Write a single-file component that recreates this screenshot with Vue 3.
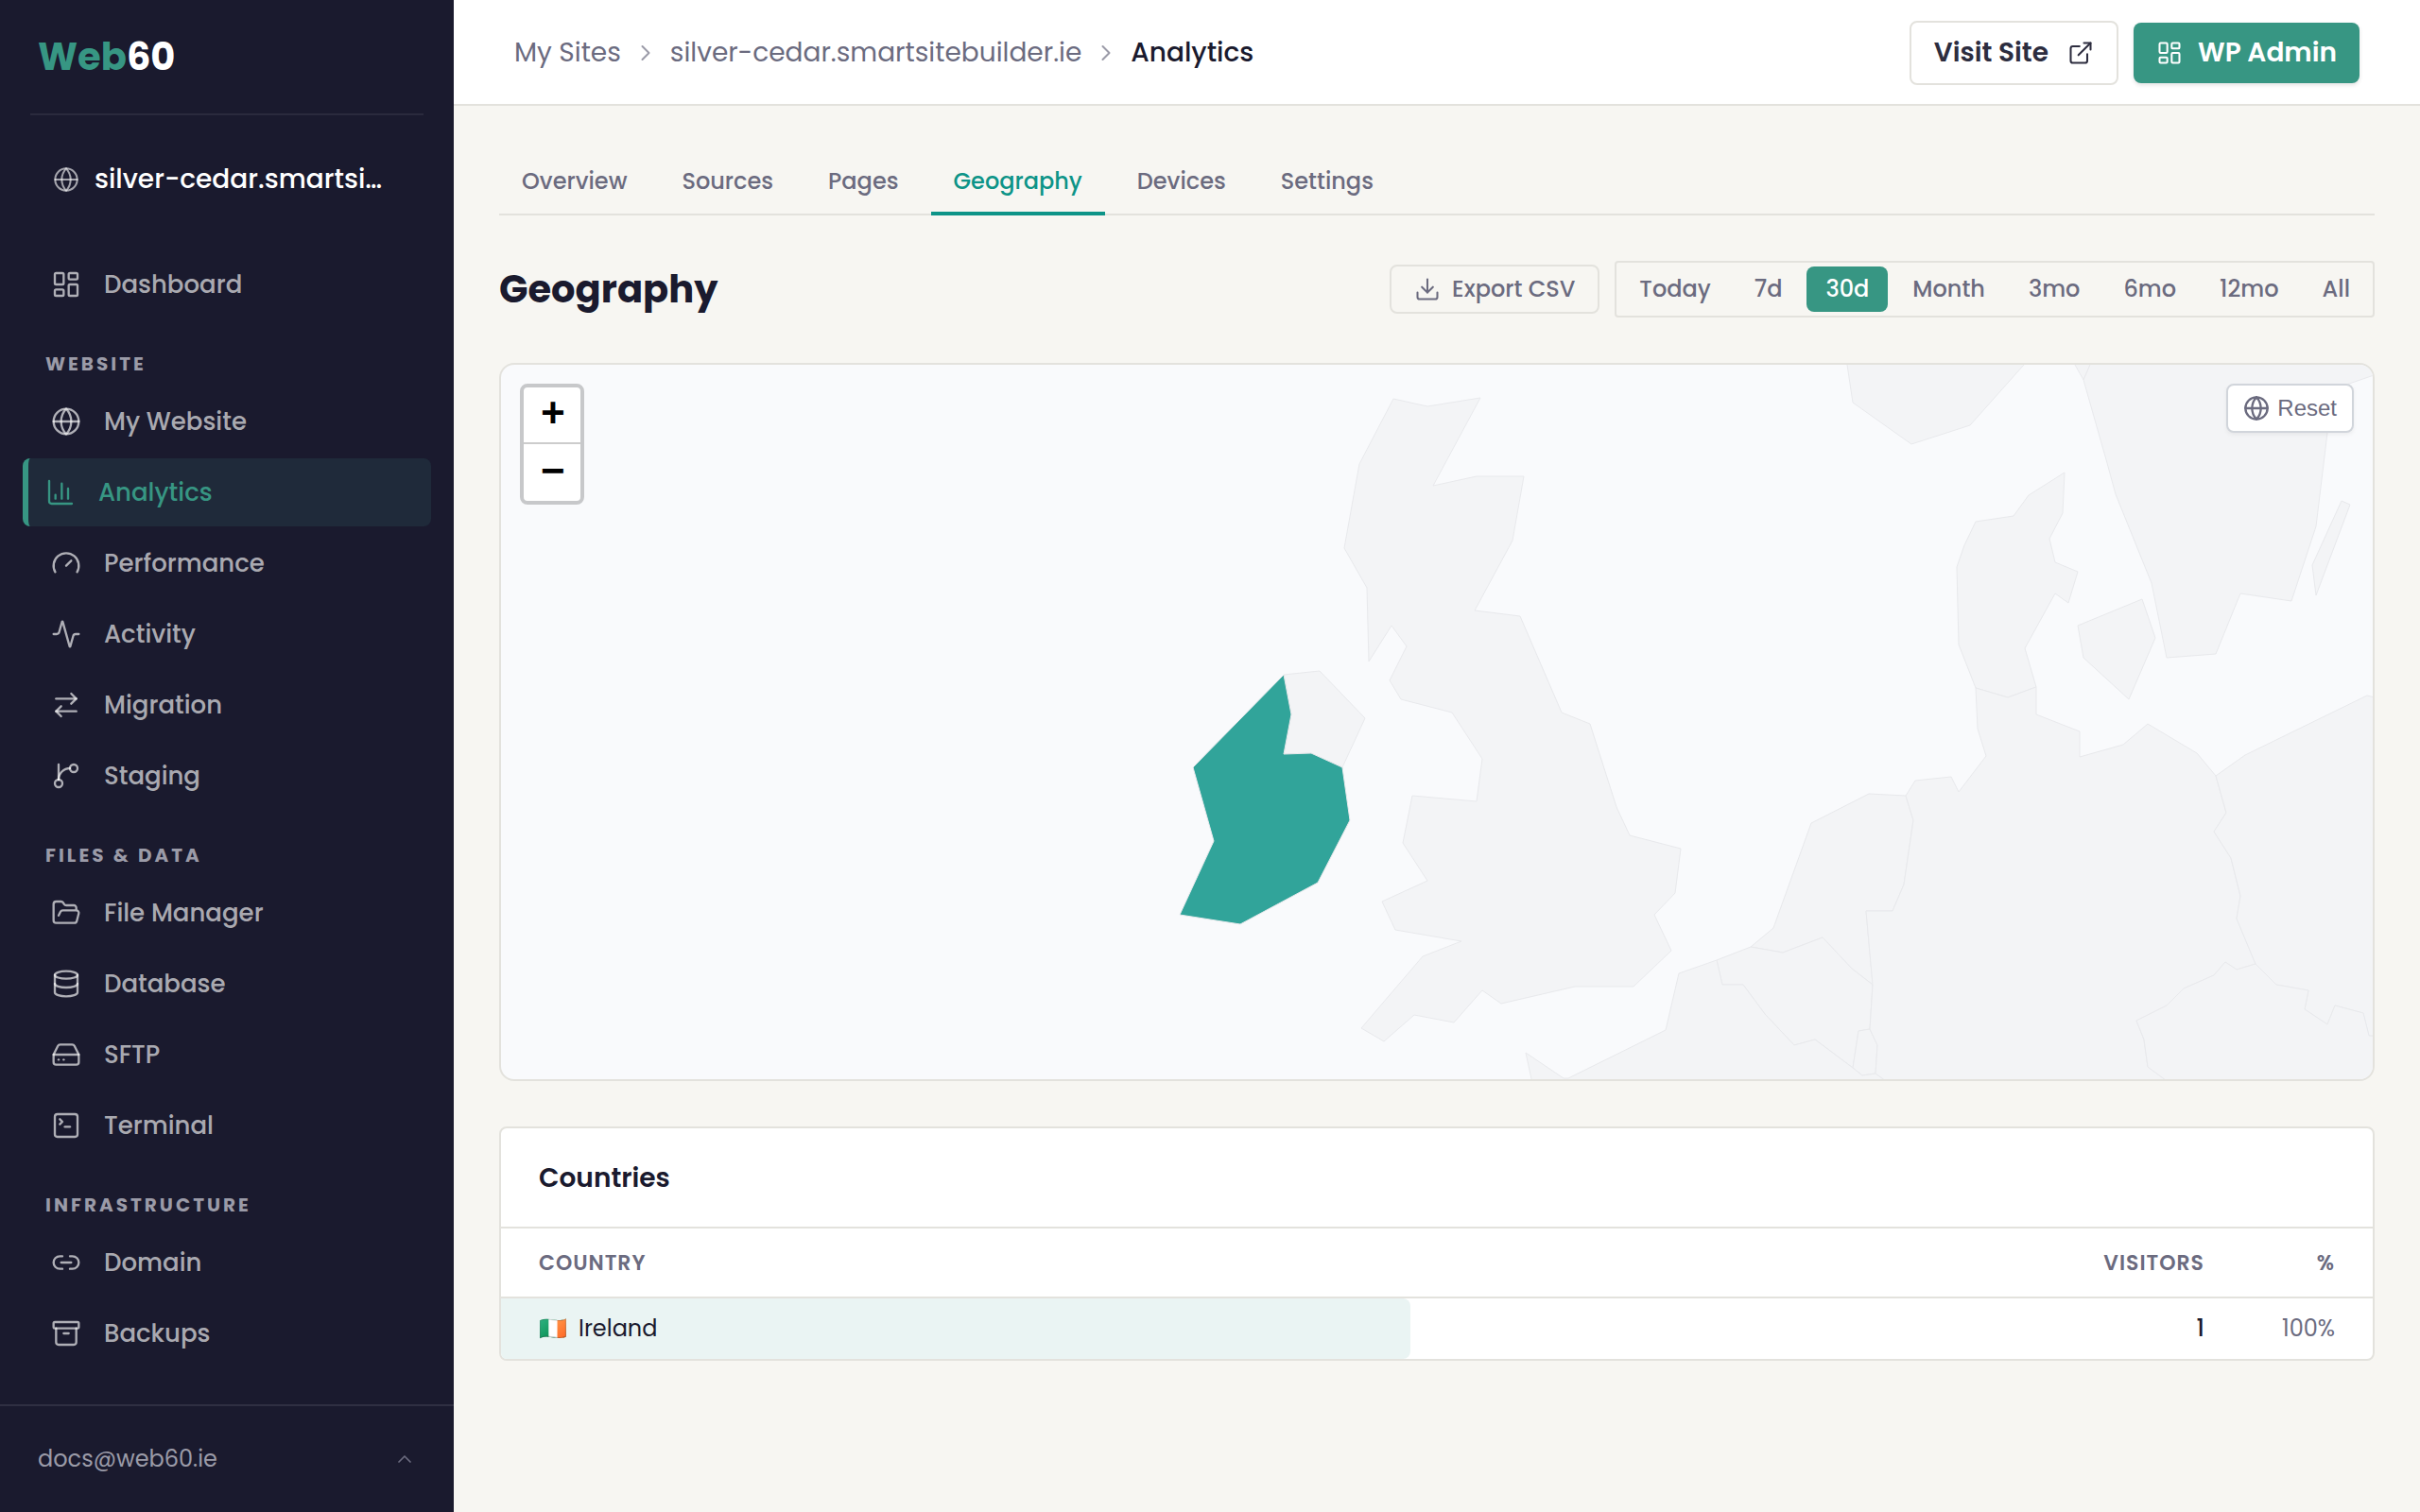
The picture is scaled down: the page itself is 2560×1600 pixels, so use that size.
<script setup>
import { h, ref } from 'vue'

const ICONS = {
  dashboard: [
    ['rect', { x: 3, y: 3, width: 7, height: 9, rx: 1 }],
    ['rect', { x: 14, y: 3, width: 7, height: 5, rx: 1 }],
    ['rect', { x: 14, y: 12, width: 7, height: 9, rx: 1 }],
    ['rect', { x: 3, y: 16, width: 7, height: 5, rx: 1 }],
  ],
  globe: [
    ['circle', { cx: 12, cy: 12, r: 10 }],
    ['path', { d: 'M12 2a14.5 14.5 0 0 0 0 20 14.5 14.5 0 0 0 0-20' }],
    ['path', { d: 'M2 12h20' }],
  ],
  chart: [
    ['path', { d: 'M3 3v16a2 2 0 0 0 2 2h16' }],
    ['path', { d: 'M18 17V9' }],
    ['path', { d: 'M13 17V5' }],
    ['path', { d: 'M8 17v-3' }],
  ],
  gauge: [
    ['path', { d: 'm12 14 4-4' }],
    ['path', { d: 'M3.34 19a10 10 0 1 1 17.32 0' }],
  ],
  activity: [
    ['path', { d: 'M22 12h-2.48a2 2 0 0 0-1.93 1.46l-2.35 8.36a.25.25 0 0 1-.48 0L9.24 2.18a.25.25 0 0 0-.48 0l-2.35 8.36A2 2 0 0 1 4.49 12H2' }],
  ],
  arrows: [
    ['path', { d: 'm16 3 4 4-4 4' }],
    ['path', { d: 'M20 7H4' }],
    ['path', { d: 'm8 21-4-4 4-4' }],
    ['path', { d: 'M4 17h16' }],
  ],
  branch: [
    ['path', { d: 'M6 3v12' }],
    ['circle', { cx: 18, cy: 6, r: 3 }],
    ['circle', { cx: 6, cy: 18, r: 3 }],
    ['path', { d: 'M15 6a9 9 0 0 0-9 9' }],
  ],
  folder: [
    ['path', { d: 'm6 14 1.5-2.9A2 2 0 0 1 9.24 10H20a2 2 0 0 1 1.94 2.5l-1.54 6a2 2 0 0 1-1.95 1.5H4a2 2 0 0 1-2-2V5a2 2 0 0 1 2-2h3.9a2 2 0 0 1 1.69.9l.81 1.2a2 2 0 0 0 1.67.9H18a2 2 0 0 1 2 2v2' }],
  ],
  database: [
    ['ellipse', { cx: 12, cy: 5, rx: 9, ry: 3 }],
    ['path', { d: 'M3 5v14a9 3 0 0 0 18 0V5' }],
    ['path', { d: 'M3 12a9 3 0 0 0 18 0' }],
  ],
  drive: [
    ['path', { d: 'M22 12H2' }],
    ['path', { d: 'M5.45 5.11 2 12v6a2 2 0 0 0 2 2h16a2 2 0 0 0 2-2v-6l-3.45-6.89A2 2 0 0 0 16.76 4H7.24a2 2 0 0 0-1.79 1.11z' }],
    ['path', { d: 'M6 16h.01' }],
    ['path', { d: 'M10 16h.01' }],
  ],
  terminal: [
    ['path', { d: 'm7 11 2-2-2-2' }],
    ['path', { d: 'M11 13h4' }],
    ['rect', { x: 3, y: 3, width: 18, height: 18, rx: 2 }],
  ],
  link: [
    ['path', { d: 'M9 17H7A5 5 0 0 1 7 7h2' }],
    ['path', { d: 'M15 7h2a5 5 0 1 1 0 10h-2' }],
    ['path', { d: 'M8 12h8' }],
  ],
  archive: [
    ['rect', { x: 2, y: 3, width: 20, height: 5, rx: 1 }],
    ['path', { d: 'M4 8v11a2 2 0 0 0 2 2h12a2 2 0 0 0 2-2V8' }],
    ['path', { d: 'M10 12h4' }],
  ],
  external: [
    ['path', { d: 'M15 3h6v6' }],
    ['path', { d: 'M10 14 21 3' }],
    ['path', { d: 'M18 13v6a2 2 0 0 1-2 2H5a2 2 0 0 1-2-2V8a2 2 0 0 1 2-2h6' }],
  ],
  download: [
    ['path', { d: 'M12 15V3' }],
    ['path', { d: 'M21 15v4a2 2 0 0 1-2 2H5a2 2 0 0 1-2-2v-4' }],
    ['path', { d: 'm7 10 5 5 5-5' }],
  ],
  right: [['path', { d: 'm9 18 6-6-6-6' }]],
  up: [['path', { d: 'm18 15-6-6-6 6' }]],
}

const Icon = ({ name, size = 32, weight = 1.75 }) =>
  h(
    'svg',
    {
      width: size,
      height: size,
      viewBox: '0 0 24 24',
      fill: 'none',
      stroke: 'currentColor',
      'stroke-width': weight,
      'stroke-linecap': 'round',
      'stroke-linejoin': 'round',
      'aria-hidden': 'true',
      style: { flex: 'none' },
    },
    ICONS[name].map(([tag, attrs]) => h(tag, attrs)),
  )
Icon.props = ['name', 'size', 'weight']

const domain = 'silver-cedar.smartsitebuilder.ie'
const truncate = (text, length) => (text.length > length ? text.slice(0, length) + '…' : text)

const sections = [
  { items: [{ label: 'Dashboard', icon: 'dashboard' }] },
  {
    title: 'Website',
    items: [
      { label: 'My Website', icon: 'globe' },
      { label: 'Analytics', icon: 'chart', active: true },
      { label: 'Performance', icon: 'gauge' },
      { label: 'Activity', icon: 'activity' },
      { label: 'Migration', icon: 'arrows' },
      { label: 'Staging', icon: 'branch' },
    ],
  },
  {
    title: 'Files & Data',
    items: [
      { label: 'File Manager', icon: 'folder' },
      { label: 'Database', icon: 'database' },
      { label: 'SFTP', icon: 'drive' },
      { label: 'Terminal', icon: 'terminal' },
    ],
  },
  {
    title: 'Infrastructure',
    items: [
      { label: 'Domain', icon: 'link' },
      { label: 'Backups', icon: 'archive' },
    ],
  },
]

const tabs = ['Overview', 'Sources', 'Pages', 'Geography', 'Devices', 'Settings']
const activeTab = 'Geography'

const ranges = ['Today', '7d', '30d', 'Month', '3mo', '6mo', '12mo', 'All']
const range = ref('30d')

const countries = [{ flag: '🇮🇪', name: 'Ireland', visitors: 1, percent: '100%', bar: 48.6 }]

const land = [
  // Great Britain
  '1474,422 1510,430 1566,421 1516,514 1562,504 1612,504 1600,572 1560,646 1608,652 1652,754 1682,766 1710,854 1724,884 1778,898 1772,945 1750,968 1768,1006 1728,1044 1666,1044 1588,1062 1568,1048 1538,1082 1496,1074 1464,1102 1440,1088 1505,1012 1546,996 1476,984 1462,954 1510,932 1484,892 1494,842 1562,848 1568,803 1536,754 1482,740 1470,720 1488,684 1472,662 1448,700 1446,622 1422,580 1438,491',
  // Northern Ireland
  '1358,714 1396,710 1444,760 1420,812 1387,797 1358,798 1366,756',
  // Norway
  '1954,376 1954,386 1960,426 2022,470 2084,450 2141,386 2150,376',
  '2190,376 2195,386 2204,402 2211,386 2214,376',
  // Sweden
  '2204,402 2229,490 2238,523 2276,617 2292,696 2344,692 2370,628 2424,636 2450,557 2462,458 2467,414 2485,406 2520,394 2520,376 2214,376 2211,386',
  '2477,530 2486,534 2450,630 2446,598',
  // Denmark
  '2090,728 2072,682 2070,600 2078,577 2090,552 2130,546 2146,524 2184,500 2182,543 2168,570 2174,595 2198,605 2188,638 2174,628 2142,686 2154,727 2124,738',
  '2198,662 2266,634 2280,675 2252,740 2204,696',
  // Netherlands
  '1852,1002 1876,982 1916,871 1977,840 2016,842 2024,868 2014,936 2002,964 1974,964 1981,1042 1959,1025 1928,992 1886,1008',
  // Belgium
  '1816,1016 1852,1002 1886,1008 1928,992 1959,1025 1981,1042 1978,1089 1966,1091 1960,1130 1920,1100 1898,1106 1867,1073 1844,1042 1822,1042',
  // Luxembourg
  '1966,1091 1978,1089 1986,1106 1984,1136 1970,1138 1960,1130',
  // France
  '1614,1114 1654,1141 1659,1141 1762,1090 1776,1030 1816,1016 1822,1042 1844,1042 1867,1073 1898,1106 1920,1100 1960,1130 1970,1138 1984,1136 1998,1146 1998,1160 1624,1160',
  // Germany
  '2016,842 2026,826 2064,822 2072,838 2101,800 2092,771 2090,728 2124,738 2154,727 2154,756 2200,774 2200,801 2246,788 2272,766 2324,797 2344,821 2355,860 2342,880 2360,908 2370,948 2366,972 2386,1020 2366,1026 2354,1018 2342,1032 2310,1046 2292,1064 2260,1080 2268,1100 2272,1129 2295,1146 2295,1160 1998,1160 1998,1146 1984,1136 1986,1106 1978,1089 1981,1042 1974,964 2002,964 2014,936 2024,868',
  // Poland
  '2344,821 2375,799 2504,736 2520,740 2520,1097 2506,1096 2500,1072 2470,1064 2462,1084 2438,1068 2442,1048 2408,1042 2386,1020 2366,972 2370,948 2360,908 2342,880 2355,860',
  // Czechia
  '2386,1020 2408,1042 2442,1048 2438,1068 2462,1084 2470,1064 2500,1072 2506,1096 2520,1097 2520,1160 2295,1160 2295,1146 2272,1129 2268,1100 2260,1080 2292,1064 2310,1046 2342,1032 2354,1018 2366,1026',
]
const ireland =
  '1358,714 1366,756 1358,798 1387,797 1420,812 1428,868 1394,934 1312,978 1248,968 1284,890 1262,812'
</script>

<template>
  <div class="app">
    <aside class="sidebar">
      <div class="brand"><span class="brand-accent">Web</span>60</div>
      <a class="site" href="#" :title="domain">
        <Icon name="globe" :size="28" />
        <span class="site-name">{{ truncate(domain, 20) }}</span>
      </a>
      <nav class="nav">
        <div v-for="(section, i) in sections" :key="i" class="nav-section">
          <h2 v-if="section.title" class="nav-title">{{ section.title }}</h2>
          <a
            v-for="item in section.items"
            :key="item.label"
            href="#"
            class="nav-item"
            :class="{ active: item.active }"
          >
            <Icon :name="item.icon" :size="32" />
            <span>{{ item.label }}</span>
          </a>
        </div>
      </nav>
      <button type="button" class="account">
        <span>docs@web60.ie</span>
        <Icon class="account-caret" name="up" :size="24" />
      </button>
    </aside>

    <div class="page">
      <header class="topbar">
        <nav class="crumbs">
          <a href="#">My Sites</a>
          <Icon class="crumb-sep" name="right" :size="28" />
          <a href="#">{{ domain }}</a>
          <Icon class="crumb-sep" name="right" :size="28" />
          <span class="current">Analytics</span>
        </nav>
        <div class="actions">
          <a href="#" class="btn visit">Visit Site <Icon name="external" :size="28" /></a>
          <a href="#" class="btn admin"><Icon name="dashboard" :size="28" /> WP Admin</a>
        </div>
      </header>

      <main class="content">
        <nav class="tabs">
          <a v-for="tab in tabs" :key="tab" href="#" class="tab" :class="{ active: tab === activeTab }">{{ tab }}</a>
        </nav>

        <div class="heading">
          <h1>Geography</h1>
          <div class="tools">
            <button type="button" class="export"><Icon name="download" :size="28" />Export CSV</button>
            <div class="ranges">
              <button
                v-for="r in ranges"
                :key="r"
                type="button"
                class="range"
                :class="{ active: r === range }"
                @click="range = r"
              >{{ r }}</button>
            </div>
          </div>
        </div>

        <section class="map">
          <svg class="map-canvas" viewBox="530 386 1980 756" preserveAspectRatio="xMidYMid slice" role="img" aria-label="Visitors by country">
            <polygon v-for="(points, i) in land" :key="i" class="land" :points="points" />
            <polygon class="land visited" :points="ireland" />
          </svg>
          <div class="zoom">
            <button type="button" aria-label="Zoom in">+</button>
            <button type="button" aria-label="Zoom out">−</button>
          </div>
          <button type="button" class="reset"><Icon name="globe" :size="28" :weight="2" />Reset</button>
        </section>

        <section class="card">
          <h2 class="card-title">Countries</h2>
          <table>
            <thead>
              <tr>
                <th>Country</th>
                <th class="visitors">Visitors</th>
                <th class="percent">%</th>
              </tr>
            </thead>
            <tbody>
              <tr v-for="row in countries" :key="row.name">
                <td>
                  <span class="bar" :style="{ width: row.bar + '%' }"></span>
                  <span class="country"><span class="flag">{{ row.flag }}</span>{{ row.name }}</span>
                </td>
                <td class="visitors">{{ row.visitors }}</td>
                <td class="percent">{{ row.percent }}</td>
              </tr>
            </tbody>
          </table>
        </section>
      </main>
    </div>
  </div>
</template>

<style>
body {
  margin: 0;
  background: #f7f6f2;
}
</style>

<style scoped>
.app {
  display: flex;
  min-height: 100vh;
  background: #f7f6f2;
  color: #1a1a2e;
  font-family: Poppins, Inter, sans-serif;
  font-size: 24px;
  line-height: 36px;
}
.app *,
.app *::before {
  box-sizing: border-box;
}
a {
  color: inherit;
  text-decoration: none;
}
button {
  margin: 0;
  border: 0;
  background: none;
  color: inherit;
  font: inherit;
  cursor: pointer;
}
h1,
h2 {
  margin: 0;
}

/* Sidebar */
.sidebar {
  display: flex;
  flex: none;
  flex-direction: column;
  width: 480px;
  background: #1a1a2e;
}
.brand {
  margin: 0 32px;
  padding: 30px 8px;
  border-bottom: 2px solid #2a2a3d;
  color: #fff;
  font-size: 40px;
  font-weight: 700;
  line-height: 60px;
}
.brand-accent {
  color: #379683;
}
.site {
  display: flex;
  align-items: center;
  gap: 16px;
  margin: 32px 48px 0 56px;
  height: 72px;
  color: rgba(255, 255, 255, 0.6);
}
.site-name {
  color: #fff;
  font-size: 28px;
  font-weight: 500;
  white-space: nowrap;
}
.nav {
  flex: 1;
  padding: 39px 24px 24px;
}
.nav-section {
  display: flex;
  flex-direction: column;
  gap: 3px;
}
.nav-title {
  margin: 33px 24px 7px;
  color: #9b9ba8;
  font-size: 20px;
  font-weight: 700;
  letter-spacing: 3px;
  line-height: 30px;
  text-transform: uppercase;
}
.nav-item {
  display: flex;
  align-items: center;
  gap: 24px;
  height: 72px;
  padding: 0 30px;
  border-radius: 8px;
  color: rgba(255, 255, 255, 0.65);
  font-size: 26px;
  font-weight: 500;
}
.nav-item.active {
  padding-left: 18px;
  border-left: 6px solid #379683;
  background: #1f2a3a;
  color: #379683;
}
.account {
  display: flex;
  align-items: center;
  justify-content: space-between;
  height: 114px;
  padding: 0 40px;
  border-top: 2px solid #2f2f42;
  color: #9b9ba8;
}
.account-caret {
  color: #6b6b7f;
}

/* Top bar */
.page {
  flex: 1;
  min-width: 0;
}
.topbar {
  display: flex;
  align-items: center;
  justify-content: space-between;
  height: 112px;
  padding: 2px 64px 0;
  border-bottom: 2px solid #e3e2dd;
  background: #fff;
}
.crumbs {
  display: flex;
  align-items: center;
  gap: 12px;
  color: #6b6b7f;
  font-size: 28px;
}
.crumb-sep {
  color: #9b9ba8;
}
.crumbs .current {
  color: #1a1a2e;
  font-weight: 500;
}
.actions {
  display: flex;
  align-items: center;
  gap: 16px;
}
.btn {
  display: flex;
  align-items: center;
  border-radius: 8px;
  font-size: 28px;
  font-weight: 600;
}
.visit {
  gap: 20px;
  height: 68px;
  padding: 0 24px;
  border: 2px solid #e3e2dd;
  background: #fff;
  color: #2d2d3f;
}
.admin {
  gap: 16px;
  height: 64px;
  padding: 0 24px;
  background: #379683;
  box-shadow: 0 2px 4px rgba(0, 0, 0, 0.12);
  color: #fff;
}

/* Content */
.content {
  padding: 48px;
}
.tabs {
  display: flex;
  gap: 10px;
  border-bottom: 2px solid #e3e2dd;
}
.tab {
  height: 68px;
  margin-bottom: -2px;
  padding: 14px 24px;
  border-bottom: 4px solid transparent;
  color: #6b6b7f;
  font-size: 24px;
  font-weight: 500;
}
.tab.active {
  border-color: #0d9488;
  color: #0d9488;
}
.heading {
  display: flex;
  align-items: center;
  justify-content: space-between;
  margin: 48px 0;
}
h1 {
  font-size: 40px;
  font-weight: 700;
  line-height: 60px;
}
.tools {
  display: flex;
  align-items: center;
  gap: 16px;
  color: #6b6b7f;
  font-weight: 500;
}
.export {
  display: flex;
  align-items: center;
  gap: 12px;
  height: 52px;
  padding: 0 24px;
  border: 2px solid #e3e2dd;
  border-radius: 8px;
}
.ranges {
  display: flex;
  gap: 6px;
  padding: 4px;
  border: 2px solid #e3e2dd;
  border-radius: 4px;
}
.range {
  height: 48px;
  padding: 0 20px;
  border-radius: 8px;
}
.range.active {
  background: #379683;
  color: #fff;
}

/* Map */
.map {
  position: relative;
  height: 760px;
  overflow: hidden;
  border: 2px solid #e3e2dd;
  border-radius: 16px;
  background: #f9fafc;
}
.map-canvas {
  display: block;
  width: 100%;
  height: 100%;
}
.land {
  fill: #f3f4f6;
  stroke: #e8e9ec;
  stroke-width: 1;
}
.visited {
  fill: #31a49a;
}
.zoom {
  position: absolute;
  top: 20px;
  left: 20px;
  width: 68px;
  border: 4px solid #c7c8ca;
  border-radius: 8px;
  background: #fff;
}
.zoom button {
  display: block;
  width: 60px;
  height: 60px;
  padding: 2px 0 0 2px;
  color: #000;
  font: bold 44px/56px "Liberation Mono", monospace;
}
.zoom button:first-child {
  border-bottom: 2px solid #ccc;
}
.reset {
  position: absolute;
  top: 20px;
  right: 20px;
  display: flex;
  align-items: center;
  gap: 8px;
  height: 52px;
  padding: 0 16px;
  border: 2px solid #d1d5db;
  border-radius: 8px;
  background: #fff;
  box-shadow: 0 2px 4px rgba(0, 0, 0, 0.06);
  color: #6b6b7f;
  font-family: "Liberation Sans", sans-serif;
}

/* Countries */
.card {
  margin-top: 48px;
  overflow: hidden;
  border: 2px solid #e3e2dd;
  border-radius: 8px;
  background: #fff;
}
.card-title {
  padding: 32px 40px 30px;
  border-bottom: 2px solid #e3e2dd;
  font-size: 28px;
  font-weight: 600;
  line-height: 42px;
}
table {
  width: 100%;
  border-spacing: 0;
}
th {
  height: 74px;
  padding: 2px 40px 0;
  border-bottom: 2px solid #e3e2dd;
  color: #6b6b7f;
  font-size: 22px;
  font-weight: 600;
  letter-spacing: 1px;
  text-align: left;
  text-transform: uppercase;
}
tbody tr {
  position: relative;
}
td {
  height: 64px;
  padding: 0 40px;
}
th.visitors,
td.visitors {
  padding-right: 0;
  text-align: right;
}
th.percent,
td.percent {
  width: 178px;
  text-align: right;
}
td.visitors {
  font-weight: 500;
}
td.percent {
  color: #6b6b7f;
}
.bar {
  position: absolute;
  top: 0;
  bottom: 0;
  left: 0;
  border-radius: 0 8px 8px 0;
  background: #eaf4f3;
}
.country {
  position: relative;
  display: flex;
  align-items: center;
  gap: 12px;
}
</style>
